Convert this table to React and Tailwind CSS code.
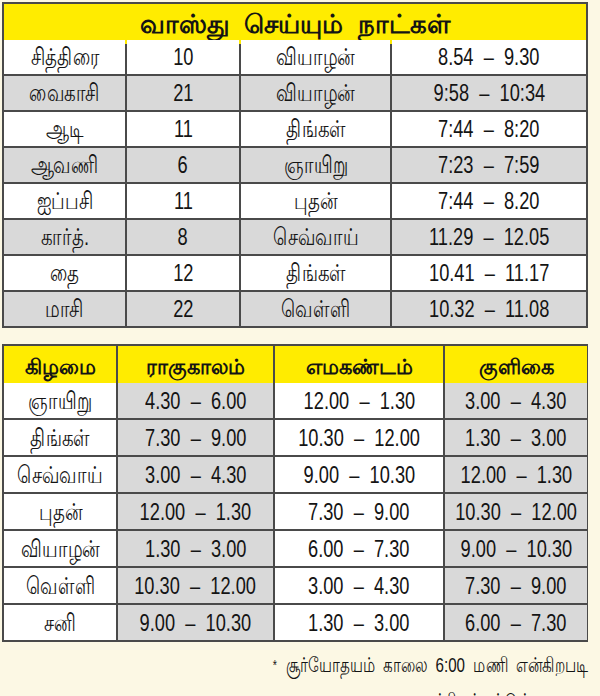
import React from 'react';

const vastu = [
  ['சித்திரை', '10', 'வியாழன்', '8.54  –  9.30'],
  ['வைகாசி', '21', 'வியாழன்', '9:58  –  10:34'],
  ['ஆடி', '11', 'திங்கள்', '7:44  –  8:20'],
  ['ஆவணி', '6', 'ஞாயிறு', '7:23  –  7:59'],
  ['ஐப்பசி', '11', 'புதன்', '7:44  –  8.20'],
  ['கார்த்.', '8', 'செவ்வாய்', '11.29  –  12.05'],
  ['தை', '12', 'திங்கள்', '10.41  –  11.17'],
  ['மாசி', '22', 'வெள்ளி', '10.32  –  11.08'],
];

const timings = [
  ['ஞாயிறு', '4.30  –  6.00', '12.00  –  1.30', '3.00  –  4.30'],
  ['திங்கள்', '7.30  –  9.00', '10.30  –  12.00', '1.30  –  3.00'],
  ['செவ்வாய்', '3.00  –  4.30', '9.00  –  10.30', '12.00  –  1.30'],
  ['புதன்', '12.00  –  1.30', '7.30  –  9.00', '10.30  –  12.00'],
  ['வியாழன்', '1.30  –  3.00', '6.00  –  7.30', '9.00  –  10.30'],
  ['வெள்ளி', '10.30  –  12.00', '3.00  –  4.30', '7.30  –  9.00'],
  ['சனி', '9.00  –  10.30', '1.30  –  3.00', '6.00  –  7.30'],
];

const font = { fontFamily: '"Liberation Sans", Arial, sans-serif' };

const Txt = ({ children }) => (
  <span className="inline-block whitespace-pre scale-x-[0.76]">{children}</span>
);

export default function App() {
  return (
    <div className="w-[600px] h-[696px] overflow-hidden bg-[#fcf8e4] pt-[2px] pl-[2px] text-[#141414]" style={font}>
      {/* vastu days */}
      <div className="w-[586px] bg-[#4a4a4a] p-[2px] grid grid-cols-[121px_112px_149px_194px] auto-rows-[34px] gap-[2px]">
        <div className="col-span-4 h-[40px] bg-[#ffec00] flex items-center justify-center text-[26px] font-bold">
          <span className="whitespace-pre">வாஸ்து  செய்யும்  நாட்கள்</span>
        </div>
        {vastu.map((row, i) =>
          row.map((cell, j) => (
            <div
              key={`${i}-${j}`}
              className={`flex items-center justify-center text-[24px] ${i % 2 ? 'bg-[#d9d9d9]' : 'bg-white'}`}
            >
              <Txt>{cell}</Txt>
            </div>
          ))
        )}
      </div>

      {/* rahu / yama / kuligai */}
      <div className="mt-[16px] w-[586px] bg-[#4a4a4a] p-[2px] grid grid-cols-[112px_155px_168px_142px] auto-rows-[35px] gap-[2px]">
        {['கிழமை', 'ராகுகாலம்', 'எமகண்டம்', 'குளிகை'].map((h) => (
          <div key={h} className="h-[41px] bg-[#ffec00] flex items-center justify-center text-[21px] font-bold">
            {h}
          </div>
        ))}
        {timings.map((row, i) =>
          row.map((cell, j) => (
            <div
              key={`${i}-${j}`}
              className={`flex items-center justify-center text-[24px] ${j % 2 ? 'bg-[#d9d9d9]' : 'bg-white'}`}
            >
              <Txt>{cell}</Txt>
            </div>
          ))
        )}
      </div>

      <div className="w-[586px] mt-[9px] flex justify-end text-[21px] leading-[28px]">
        <span className="inline-block whitespace-pre origin-right scale-x-[0.72]">
          <span className="align-top text-[15px] mr-3">*</span>சூர்யோதயம்  காலை  6:00  மணி  என்கிறபடி
        </span>
      </div>
      <div className="w-[586px] mt-[8px] flex justify-end pr-[30px] text-[21px] leading-[28px]">
        <span className="inline-block whitespace-pre origin-right scale-x-[0.72]">
          கணக்கிடப்பட்டுள்ளது
        </span>
      </div>
    </div>
  );
}
